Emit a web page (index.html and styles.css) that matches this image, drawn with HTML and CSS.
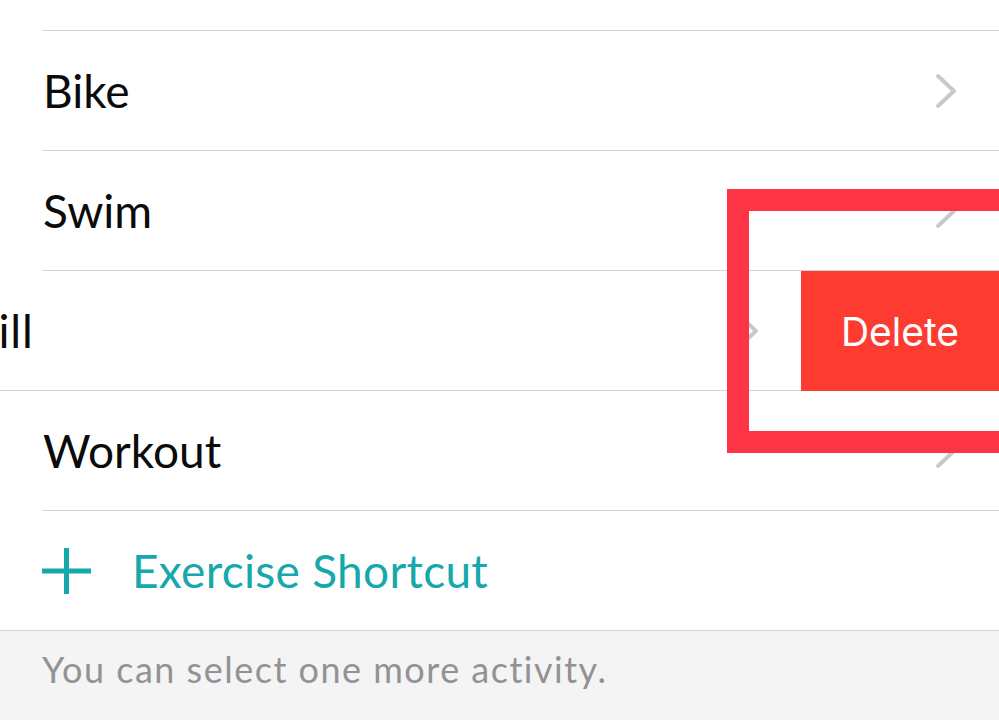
FILE: index.html
```html
<!DOCTYPE html>
<html>
<head>
<meta charset="utf-8">
<link rel="stylesheet" href="styles.css">
</head>
<body>
<div class="screen">
  <div class="list">
    <div class="row row-partial"><div class="row-inner"></div></div>
    <div class="row">
      <div class="row-inner">
        <span class="label">Bike</span>
        <svg class="chev" width="24" height="38" viewBox="0 0 24 38"><polyline points="4,4 20,19 4,34" fill="none" stroke="#c8c8cd" stroke-width="4" stroke-linecap="round" stroke-linejoin="round"/></svg>
      </div>
    </div>
    <div class="row">
      <div class="row-inner">
        <span class="label">Swim</span>
        <svg class="chev" width="24" height="38" viewBox="0 0 24 38"><polyline points="4,4 20,19 4,34" fill="none" stroke="#c8c8cd" stroke-width="4" stroke-linecap="round" stroke-linejoin="round"/></svg>
      </div>
    </div>
    <div class="row row-swiped">
      <div class="swipe-content">
        <div class="row-inner">
          <span class="label label-wide">Treadmill</span>
          <svg class="chev" width="24" height="38" viewBox="0 0 24 38"><polyline points="4,4 20,19 4,34" fill="none" stroke="#c8c8cd" stroke-width="4" stroke-linecap="round" stroke-linejoin="round"/></svg>
        </div>
      </div>
      <div class="delete">Delete</div>
    </div>
    <div class="row">
      <div class="row-inner">
        <span class="label">Workout</span>
        <svg class="chev" width="24" height="38" viewBox="0 0 24 38"><polyline points="4,4 20,19 4,34" fill="none" stroke="#c8c8cd" stroke-width="4" stroke-linecap="round" stroke-linejoin="round"/></svg>
      </div>
    </div>
    <div class="row row-add">
      <div class="row-inner add-inner">
        <svg class="plus" width="49" height="50" viewBox="0 0 49 50"><path d="M24.5 2 V48 M0 25 H49" stroke="#17a8ab" stroke-width="5" fill="none"/></svg>
        <span class="label add-label">Exercise Shortcut</span>
      </div>
    </div>
  </div>
  <div class="footer">You can select one more activity.</div>
  <div class="highlight"></div>
</div>
</body>
</html>
```
FILE: styles.css
```css
html, body {
  margin: 0;
  padding: 0;
  background: #ffffff;
}
.screen {
  position: relative;
  width: 999px;
  height: 720px;
  overflow: hidden;
  font-family: "Lato", "Liberation Sans", sans-serif;
}
.list {
  display: flex;
  flex-direction: column;
}
.row {
  height: 120px;
  box-sizing: border-box;
  padding-left: 42px;
  display: flex;
}
.row-partial {
  height: 31px;
}
.row-inner {
  flex: 1;
  box-sizing: border-box;
  border-bottom: 1px solid #d4d4d6;
  display: flex;
  align-items: center;
  justify-content: space-between;
  padding-left: 1px;
  padding-right: 41px;
}
.label {
  font-size: 46px;
  color: #0b0b0b;
}
.label-wide {
  letter-spacing: 0.8px;
}
.chev {
  display: block;
}
.row-swiped {
  padding-left: 0;
  overflow: hidden;
}
.swipe-content {
  flex: 0 0 999px;
  margin-left: -198px;
  box-sizing: border-box;
  padding-left: 42px;
  display: flex;
}
.delete {
  flex: 0 0 198px;
  background: #fe3b30;
  color: #ffffff;
  font-family: "Inter", "Roboto", sans-serif;
  font-size: 39px;
  display: flex;
  align-items: center;
  justify-content: center;
}
.row-add {
  height: 119px;
  padding-left: 42px;
}
.add-inner {
  justify-content: flex-start;
  border-bottom: none;
  padding-left: 0;
}
.plus {
  display: block;
  margin-right: 41px;
}
.add-label {
  color: #17a8ab;
  font-size: 46px;
  letter-spacing: 0.3px;
}
.footer {
  border-top: 1px solid #d8d8d8;
  background: #f4f4f4;
  height: 90px;
  box-sizing: border-box;
  padding: 16px 0 0 42px;
  font-size: 36px;
  letter-spacing: 1.5px;
  color: #929296;
}
.highlight {
  position: absolute;
  left: 727px;
  top: 189px;
  width: 320px;
  height: 264px;
  box-sizing: border-box;
  border: 22px solid #fc3446;
}
```
